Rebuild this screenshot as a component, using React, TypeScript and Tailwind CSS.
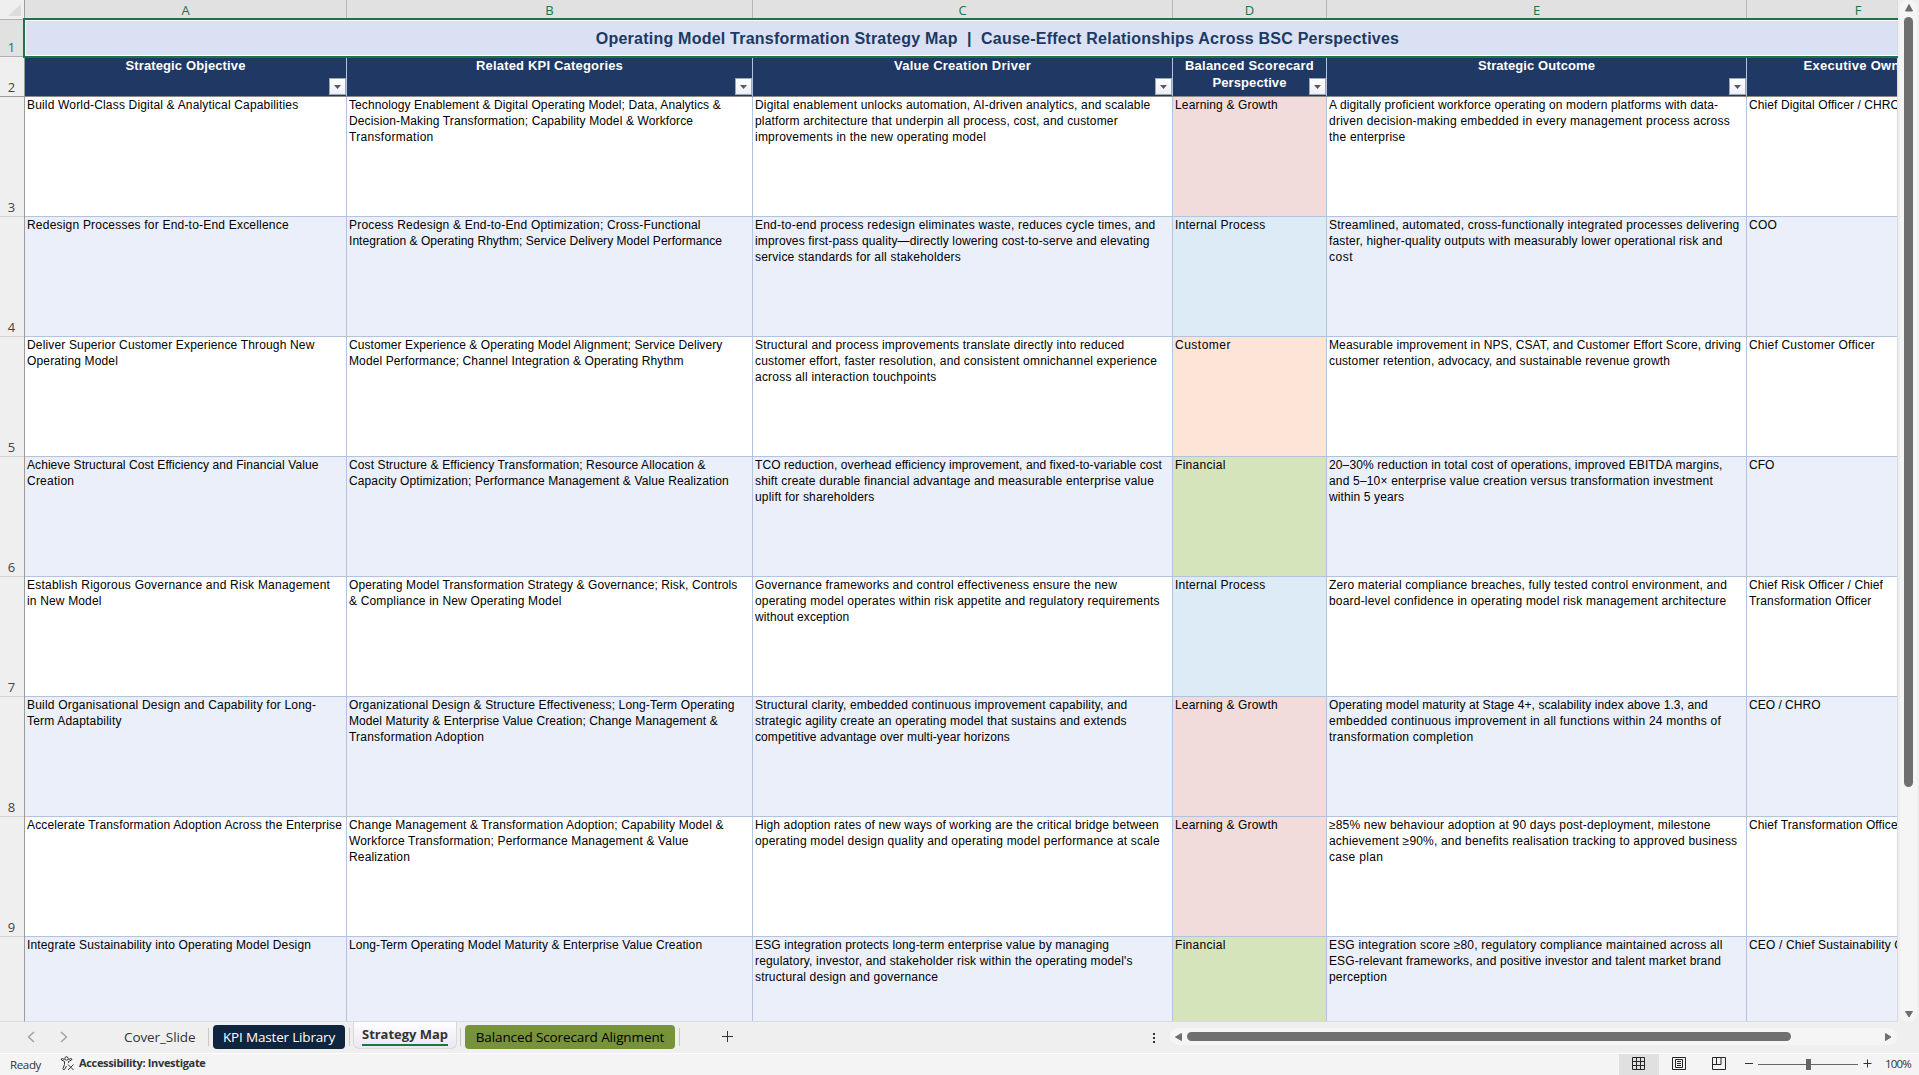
import React from 'react';

type Line = [text: string, width: number];
interface Row {
  n: number;
  a: Line[];
  b: Line[];
  c: Line[];
  d: Line;
  e: Line[];
  f: Line[];
}

const LG: Line = ['Learning & Growth', 101.7];
const IP: Line = ['Internal Process', 89.5];
const CU: Line = ['Customer', 55];
const FI: Line = ['Financial', 49.8];

const rows: Row[] = [
  {
    n: 3,
    a: [['Build World-Class Digital & Analytical Capabilities', 271]],
    b: [['Technology Enablement & Digital Operating Model; Data, Analytics &', 371.4], ['Decision-Making Transformation; Capability Model & Workforce', 343.3], ['Transformation', 83.6]],
    c: [['Digital enablement unlocks automation, AI-driven analytics, and scalable', 395], ['platform architecture that underpin all process, cost, and customer', 361.8], ['improvements in the new operating model', 230]],
    d: LG,
    e: [['A digitally proficient workforce operating on modern platforms with data-', 388.8], ['driven decision-making embedded in every management process across', 400], ['the enterprise', 75.4]],
    f: [['Chief Digital Officer / CHRO', 150]],
  },
  {
    n: 4,
    a: [['Redesign Processes for End-to-End Excellence', 260.8]],
    b: [['Process Redesign & End-to-End Optimization; Cross-Functional', 350.7], ['Integration & Operating Rhythm; Service Delivery Model Performance', 372]],
    c: [['End-to-end process redesign eliminates waste, reduces cycle times, and', 399.5], ['improves first-pass quality—directly lowering cost-to-serve and elevating', 393.6], ['service standards for all stakeholders', 205]],
    d: IP,
    e: [['Streamlined, automated, cross-functionally integrated processes delivering', 409.5], ['faster, higher-quality outputs with measurably lower operational risk and', 392.5], ['cost', 23]],
    f: [['COO', 27]],
  },
  {
    n: 5,
    a: [['Deliver Superior Customer Experience Through New', 286.7], ['Operating Model', 90]],
    b: [['Customer Experience & Operating Model Alignment; Service Delivery', 373], ['Model Performance; Channel Integration & Operating Rhythm', 333.7]],
    c: [['Structural and process improvements translate directly into reduced', 368.4], ['customer effort, faster resolution, and consistent omnichannel experience', 401], ['across all interaction touchpoints', 180.5]],
    d: CU,
    e: [['Measurable improvement in NPS, CSAT, and Customer Effort Score, driving', 411], ['customer retention, advocacy, and sustainable revenue growth', 340]],
    f: [['Chief Customer Officer', 125]],
  },
  {
    n: 6,
    a: [['Achieve Structural Cost Efficiency and Financial Value', 290.4], ['Creation', 46.2]],
    b: [['Cost Structure & Efficiency Transformation; Resource Allocation &', 356.6], ['Capacity Optimization; Performance Management & Value Realization', 378.8]],
    c: [['TCO reduction, overhead efficiency improvement, and fixed-to-variable cost', 406], ['shift create durable financial advantage and measurable enterprise value', 398], ['uplift for shareholders', 118.4]],
    d: FI,
    e: [['20–30% reduction in total cost of operations, improved EBITDA margins,', 393.2], ['and 5–10× enterprise value creation versus transformation investment', 383], ['within 5 years', 74]],
    f: [['CFO', 24.5]],
  },
  {
    n: 7,
    a: [['Establish Rigorous Governance and Risk Management', 302.2], ['in New Model', 73.6]],
    b: [['Operating Model Transformation Strategy & Governance; Risk, Controls', 387.6], ['& Compliance in New Operating Model', 211.6]],
    c: [['Governance frameworks and control effectiveness ensure the new', 361], ['operating model operates within risk appetite and regulatory requirements', 403.8], ['without exception', 93.3]],
    d: IP,
    e: [['Zero material compliance breaches, fully tested control environment, and', 397], ['board-level confidence in operating model risk management architecture', 396.4]],
    f: [['Chief Risk Officer / Chief', 133], ['Transformation Officer', 121.5]],
  },
  {
    n: 8,
    a: [['Build Organisational Design and Capability for Long-', 288.2], ['Term Adaptability', 94.3]],
    b: [['Organizational Design & Structure Effectiveness; Long-Term Operating', 384.7], ['Model Maturity & Enterprise Value Creation; Change Management &', 367.7], ['Transformation Adoption', 134.7]],
    c: [['Structural clarity, embedded continuous improvement capability, and', 371.4], ['strategic agility create an operating model that sustains and extends', 370.6], ['competitive advantage over multi-year horizons', 253.8]],
    d: LG,
    e: [['Operating model maturity at Stage 4+, scalability index above 1.3, and', 377.7], ['embedded continuous improvement in all functions within 24 months of', 391], ['transformation completion', 143.4]],
    f: [['CEO / CHRO', 70.5]],
  },
  {
    n: 9,
    a: [['Accelerate Transformation Adoption Across the Enterprise', 315.5]],
    b: [['Change Management & Transformation Adoption; Capability Model &', 374.4], ['Workforce Transformation; Performance Management & Value', 338.8], ['Realization', 60]],
    c: [['High adoption rates of new ways of working are the critical bridge between', 402.8], ['operating model design quality and operating model performance at scale', 403.8]],
    d: LG,
    e: [['≥85% new behaviour adoption at 90 days post-deployment, milestone', 380.7], ['achievement ≥90%, and benefits realisation tracking to approved business', 407.3], ['case plan', 53.2]],
    f: [['Chief Transformation Officer', 152]],
  },
  {
    n: 10,
    a: [['Integrate Sustainability into Operating Model Design', 283]],
    b: [['Long-Term Operating Model Maturity & Enterprise Value Creation', 352.2]],
    c: [['ESG integration protects long-term enterprise value by managing', 353], ["regulatory, investor, and stakeholder risk within the operating model's", 376.6], ['structural design and governance', 182]],
    d: FI,
    e: [['ESG integration score ≥80, regulatory compliance maintained across all', 392.5], ['ESG-relevant frameworks, and positive investor and talent market brand', 391], ['perception', 57]],
    f: [['CEO / Chief Sustainability Officer', 180.5]],
  },
];

const perspectiveBg: Record<string, string> = {
  'Learning & Growth': 'bg-[#f2dcdb]',
  'Internal Process': 'bg-[#ddebf7]',
  Customer: 'bg-[#fce4d6]',
  Financial: 'bg-[#d6e4bc]',
};

const cols = 'grid grid-cols-[322px_406px_420px_154px_420px_223px] w-[1945px]';

const ctx = document.createElement('canvas').getContext('2d')!;

/** Text tracked so that it fills the given width in pixels. */
function Fit({ font, width, children, className = '' }: { font: string; width: number; children: string; className?: string }) {
  ctx.font = font;
  const spacing = (width - ctx.measureText(children).width) / children.length;
  return (
    <span className={`whitespace-pre ${className}`} style={{ letterSpacing: `${spacing.toFixed(3)}px` }}>
      {children}
    </span>
  );
}

const CELL_FONT = '12px "Liberation Sans"';
const HEAD_FONT = 'bold 13px "Liberation Sans"';
const TITLE_FONT = 'bold 16px "Liberation Sans"';
const TAB_FONT = '13.5px "Open Sans"';

function Cell({ lines, bg = '' }: { lines: Line[]; bg?: string }) {
  return (
    <div className={`border-r border-b border-[#b3c3dd] pl-[2px] text-[12px] leading-[16px] whitespace-nowrap text-black ${bg}`}>
      {lines.map(([text, width]) => (
        <div key={text}>
          <Fit font={CELL_FONT} width={width + 1}>{text}</Fit>
        </div>
      ))}
    </div>
  );
}

function FilterButton() {
  return (
    <span className="absolute right-0 bottom-[1px] flex h-[17px] w-[17px] items-center justify-center border border-[#a0a6b0] bg-linear-to-b from-white to-[#eceff6]">
      <svg width="7" height="4" viewBox="0 0 7 4"><path d="M0 0h7L3.5 4z" fill="#5a5a5a" /></svg>
    </span>
  );
}

function Tri({ d }: { d: string }) {
  return (
    <svg width="10" height="10" viewBox="0 0 10 10" className="shrink-0">
      <path d={d} fill="#6f6f6f" stroke="#6f6f6f" strokeLinejoin="round" />
    </svg>
  );
}

const headers: Line[][] = [
  [['Strategic Objective', 120]],
  [['Related KPI Categories', 147]],
  [['Value Creation Driver', 137]],
  [['Balanced Scorecard', 129], ['Perspective', 74]],
  [['Strategic Outcome', 117]],
  [['Executive Owner', 109]],
];

function Divider({ className = '' }: { className?: string }) {
  return <div className={`mt-[6px] h-[18px] w-px bg-[#c8c8c8] ${className}`} />;
}

export default function App() {
  return (
    <div className="flex h-[1075px] w-[1919px] flex-col overflow-hidden bg-[#efefef] font-['Liberation_Sans',sans-serif]">
      <div className="flex h-[1022px] shrink-0">
        <div className="relative flex w-[1898px] shrink-0 overflow-hidden">
          {/* Row numbers */}
          <div className="flex w-[25px] shrink-0 flex-col overflow-hidden border-r border-b border-r-[#9b9b9b] border-b-[#d9dbdf] text-center font-['Open_Sans',sans-serif] text-[13px] leading-[17px] text-[#444]">
            <div className="flex h-[20px] shrink-0 items-end justify-end border-b border-[#b0b0b0] pr-[3px] pb-[3px]">
              <svg width="13" height="12" viewBox="0 0 13 12"><path d="M13 0v12H0z" fill="#dcdcdc" /></svg>
            </div>
            <div className="flex h-[37px] shrink-0 items-end justify-center border-b border-[#b0b0b0] bg-[#e1e1e1] pr-px text-[#217346]">1</div>
            <div className="flex h-[40px] shrink-0 items-end justify-center border-b border-[#9b9b9b] pr-px">2</div>
            {rows.map((r) => (
              <div key={r.n} className="flex h-[120px] shrink-0 items-end justify-center border-b border-[#d4d4d4] pr-px">{r.n}</div>
            ))}
          </div>
          {/* Sheet */}
          <div className="w-[1873px] shrink-0 overflow-hidden border-r border-b border-[#d9dbdf]">
            <div className={`${cols} h-[18px] bg-[#e1e1e1] text-center font-['Open_Sans',sans-serif] text-[13px] leading-[21px] text-[#217346]`}>
              {['A', 'B', 'C', 'D', 'E', 'F'].map((c) => (
                <div key={c} className="h-[18px] border-r border-[#b5b5b5]">{c}</div>
              ))}
            </div>
            <div className="flex h-[40px] w-[1945px] items-center justify-center bg-[#d9e1f2] pt-[2px] text-[16px] font-bold text-[#203864]">
              <Fit font={TITLE_FONT} width={804}>Operating Model Transformation Strategy Map  |  Cause-Effect Relationships Across BSC Perspectives</Fit>
            </div>
            <div className={`${cols} h-[39px] border-b border-[#8a8a8a] bg-[#203864] text-center text-[13px] leading-[17px] font-bold text-white`}>
              {headers.map((h, i) => (
                <div key={i} className="relative h-[38px] border-r border-[#b3c3dd]">
                  <div className="-mt-px">
                    {h.map(([text, width]) => (
                      <div key={text}>
                        <Fit font={HEAD_FONT} width={width}>{text}</Fit>
                      </div>
                    ))}
                  </div>
                  <FilterButton />
                </div>
              ))}
            </div>
            {rows.map((r) => {
              const bg = r.n % 2 ? 'bg-white' : 'bg-[#eaeffa]';
              return (
                <div key={r.n} className={`${cols} h-[120px]`}>
                  <Cell lines={r.a} bg={bg} />
                  <Cell lines={r.b} bg={bg} />
                  <Cell lines={r.c} bg={bg} />
                  <Cell lines={[r.d]} bg={perspectiveBg[r.d[0]]} />
                  <Cell lines={r.e} bg={bg} />
                  <Cell lines={r.f} bg={bg} />
                </div>
              );
            })}
          </div>
          {/* Selection outline around the merged title cell */}
          <div className="pointer-events-none absolute top-[18px] left-[23px] h-[40px] w-[1960px] border-2 border-[#217346] inset-ring inset-ring-white" />
        </div>
        {/* Vertical scrollbar */}
        <div className="ml-[2px] flex h-[1022px] w-[17px] flex-col items-center rounded-lg bg-[#f5f5f5] pt-[3px] pb-[3px]">
          <Tri d="M5 1.5L8.500 8h-7z" />
          <div className="mt-[4px] h-[770px] w-[9px] rounded-full bg-[#6f6f6f]" />
          <div className="grow" />
          <Tri d="M5 8L1.500 2.500h7z" />
        </div>
      </div>

      {/* Sheet tabs */}
      <div className="flex h-[31px] shrink-0 items-start font-['Open_Sans',sans-serif] text-[13.5px] text-[#333]">
        <div className="flex h-[29px] w-[124px] items-center pl-[27px]">
          <svg width="41" height="12" viewBox="0 0 41 12" fill="none" stroke="#a0a0a0" strokeWidth="1.4"><path d="M7 1L1.500 6L7 11M34 1L39.500 6L34 11" /></svg>
        </div>
        <div className="flex h-[31px] w-[84px] items-center">
          <Fit font={TAB_FONT} width={71.5}>Cover_Slide</Fit>
        </div>
        <Divider />
        <div className="mt-[3px] ml-[4px] flex h-[24px] w-[132px] items-center justify-center rounded bg-[#0f243e] text-white">
          <Fit font={TAB_FONT} width={112}>KPI Master Library</Fit>
        </div>
        <Divider className="ml-[4px]" />
        <div className="-mt-px ml-[3px] flex h-[28px] w-[104px] justify-center rounded-b-md border border-t-0 border-[#d9d9d9] bg-linear-to-b from-white to-[#ece6f2]">
          <span className="h-[25px] border-b-2 border-[#107c41] leading-[27px]">
            <Fit font={'bold 13px "Open Sans"'} width={86} className="text-[13px] font-bold">Strategy Map</Fit>
          </span>
        </div>
        <Divider className="ml-[3px]" />
        <div className="mt-[3px] ml-[4px] flex h-[24px] w-[210px] items-center justify-center rounded bg-[#76933c] text-black">
          <Fit font={TAB_FONT} width={188.5}>Balanced Scorecard Alignment</Fit>
        </div>
        <Divider className="ml-[4px]" />
        <svg className="mt-[9px] ml-[42px]" width="11" height="11" viewBox="0 0 11 11" stroke="#333"><path d="M5.500 0v11M0 5.500h11" /></svg>
        <div className="mt-[11px] ml-[420px] flex flex-col gap-[2px]">
          <i className="size-[2px] bg-[#333]" /><i className="size-[2px] bg-[#333]" /><i className="size-[2px] bg-[#333]" />
        </div>
        <div className="mt-[6px] mr-[22px] ml-auto flex h-[17px] w-[727px] items-center rounded-full bg-[#f5f5f5] px-[4px]">
          <Tri d="M1.500 5L7.500 1.500v7z" />
          <div className="ml-[3px] h-[9px] w-[604px] rounded-full bg-[#6f6f6f]" />
          <div className="grow" />
          <Tri d="M8 5L2.500 1.500v7z" />
        </div>
      </div>

      {/* Status bar */}
      <div className="flex h-[22px] shrink-0 items-center border-t border-white bg-[#f4f4f4] font-['Open_Sans',sans-serif] text-[11.5px] text-[#333]">
        <span className="w-[51px] pl-[10px]">
          <Fit font={'11.5px "Open Sans"'} width={31}>Ready</Fit>
        </span>
        <svg className="-mt-[2px] ml-[9px]" width="15" height="15" viewBox="0 0 15 15" fill="none" stroke="#333">
          <circle cx="6.500" cy="2.500" r="1.700" />
          <path d="M4.500 3.500L2 2.500Q.5 3 1.500 4L4.500 5.500V8.500L3 12.500Q3.200 14.500 4.500 13.500L6.500 10M8.500 3.500L11 2.500Q12.500 3 11.500 4L8.500 5.500V7M8 8.500L13.500 14M13.500 8.500L8 14" />
        </svg>
        <Fit font={'bold 11px "Open Sans"'} width={126.5} className="-mt-[2px] ml-[4px] text-[11px] font-bold">Accessibility: Investigate</Fit>
        <div className="ml-auto flex h-full items-center">
          <div className="flex h-full w-[40px] items-center justify-center bg-[#e0e0e0] pr-[1px] pb-[2px]">
            <svg width="13" height="13" viewBox="0 0 13 13" fill="none" stroke="#262626"><path d="M.5.5h12v12H.5zM.5 4.500h12M.5 8.500h12M4.500.5v12M8.500.5v12" /></svg>
          </div>
          <div className="flex w-[40px] justify-center pb-[2px]">
            <svg width="14" height="13" viewBox="0 0 14 13" fill="none" stroke="#262626"><path d="M.5.500h13v12H.5zM3.500 2.500h7v8h-7zM5 4.500h4M5 6.500h4M5 8.500h4" /></svg>
          </div>
          <div className="flex w-[40px] justify-center pb-[2px]">
            <svg width="14" height="13" viewBox="0 0 14 13" fill="none" stroke="#262626"><path d="M.5.500h13v12H.5zM.5 7.500h8.500V.5M4.500.5v7" /></svg>
          </div>
          <div className="-mt-[2px] ml-[6px] h-px w-[8px] bg-[#333]" />
          <div className="relative ml-[5px] h-px w-[100px] bg-[#666]"><span className="absolute -top-[5px] left-[48px] h-[11px] w-[5px] bg-[#666]" /></div>
          <svg className="-mt-[2px] ml-[5px]" width="9" height="9" viewBox="0 0 9 9" stroke="#333"><path d="M4.500.5v8M.5 4.500h8" /></svg>
          <Fit font={'11.5px "Open Sans"'} width={26} className="-mt-[2px] mr-[8px] ml-[13px]">100%</Fit>
        </div>
      </div>
    </div>
  );
}
